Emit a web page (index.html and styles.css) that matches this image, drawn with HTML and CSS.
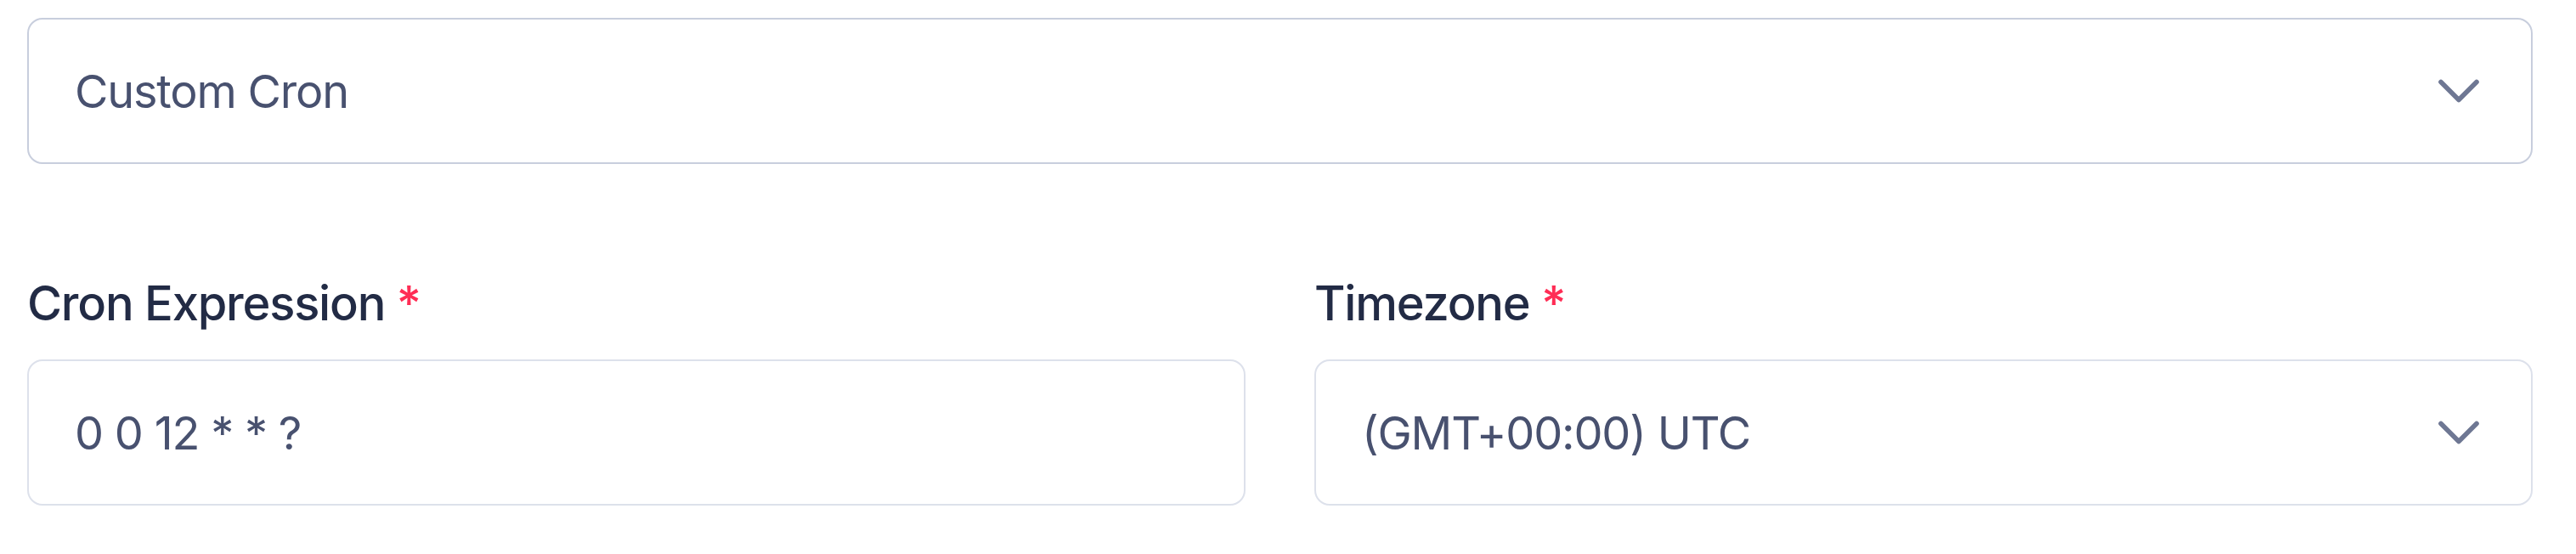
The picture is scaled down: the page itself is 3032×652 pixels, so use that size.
FILE: index.html
```html
<!DOCTYPE html>
<html lang="en">
<head>
<meta charset="utf-8">
<title>Cron schedule</title>
<link rel="stylesheet" href="styles.css">
</head>
<body>
<div class="form">
  <div class="select select-strong">
    <span class="value">Custom Cron</span>
    <svg class="chevron" viewBox="0 0 24 24" aria-hidden="true"><path d="M6 9l6 6 6-6"/></svg>
  </div>
  <div class="fields">
    <div class="field">
      <label class="label">Cron Expression <span class="req">*</span></label>
      <div class="select">
        <span class="value">0 0 12 * * ?</span>
      </div>
    </div>
    <div class="field">
      <label class="label">Timezone <span class="req">*</span></label>
      <div class="select">
        <span class="value">(GMT+00:00) UTC</span>
        <svg class="chevron" viewBox="0 0 24 24" aria-hidden="true"><path d="M6 9l6 6 6-6"/></svg>
      </div>
    </div>
  </div>
</div>
</body>
</html>
```
FILE: styles.css
```css
html, body {
  margin: 0;
  background: #ffffff;
}

.form {
  display: flex;
  flex-direction: column;
  padding: 21px 51px 0 32px;
  font-family: "Inter", "Liberation Sans", sans-serif;
}

.select {
  box-sizing: border-box;
  height: 172px;
  display: flex;
  align-items: center;
  justify-content: space-between;
  padding: 0 43px 0 54px;
  border: 2px solid #dde1eb;
  border-radius: 18px;
  background: #ffffff;
}

.select-strong {
  border-color: #c8cedd;
}

.value {
  font-size: 54px;
  font-weight: 400;
  color: #48516f;
  letter-spacing: -1.2px;
}

.chevron {
  width: 84px;
  height: 84px;
  flex: none;
  fill: none;
  stroke: #6e7793;
  stroke-width: 1.6;
  stroke-linecap: round;
  stroke-linejoin: round;
}

.fields {
  margin-top: 132px;
  display: grid;
  grid-template-columns: 1fr 1fr;
  column-gap: 81px;
}

.field {
  display: flex;
  flex-direction: column;
  gap: 33px;
}

.label {
  font-size: 56px;
  line-height: 65px;
  font-weight: 500;
  color: #222b45;
  letter-spacing: -1.2px;
}

.req {
  color: #ff2d55;
}
```
